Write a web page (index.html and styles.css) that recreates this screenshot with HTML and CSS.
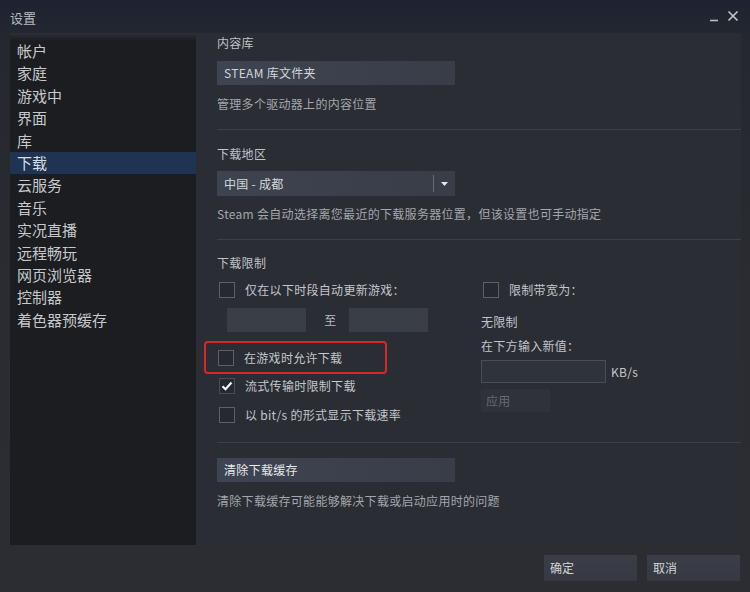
FILE: index.html
```html
<!DOCTYPE html>
<html lang="zh-CN">
<head>
    <meta charset="UTF-8">
    <title>设置</title>
    <link rel="stylesheet" href="styles.css">
</head>
<body>
    <div class="window">
        <div class="titlebar">
            <span class="title">设置</span>
            <div class="controls">
                <svg width="10" height="10" viewBox="0 0 10 10"><path d="M1 8.5h8" stroke="#b9bcc0" stroke-width="1.6"/></svg>
                <svg width="12" height="12" viewBox="0 0 12 12"><path d="M1.5 1.5l9 9M10.5 1.5l-9 9" stroke="#c3c6ca" stroke-width="1.6"/></svg>
            </div>
        </div>

        <div class="main">
            <ul class="sidebar">
                <li>帐户</li>
                <li>家庭</li>
                <li>游戏中</li>
                <li>界面</li>
                <li>库</li>
                <li class="active">下载</li>
                <li>云服务</li>
                <li>音乐</li>
                <li>实况直播</li>
                <li>远程畅玩</li>
                <li>网页浏览器</li>
                <li>控制器</li>
                <li>着色器预缓存</li>
            </ul>

            <div class="content">
                <div class="section first">
                    <div class="label">内容库</div>
                    <div class="btn wide">STEAM 库文件夹</div>
                    <div class="desc">管理多个驱动器上的内容位置</div>
                </div>

                <div class="section">
                    <div class="label">下载地区</div>
                    <div class="select">
                        <span class="select-text">中国 - 成都</span>
                        <span class="select-arrow"><svg width="7" height="4" viewBox="0 0 7 4"><path d="M0 0h7L3.5 4z" fill="#e4e6e8"/></svg></span>
                    </div>
                    <div class="desc">Steam 会自动选择离您最近的下载服务器位置，但该设置也可手动指定</div>
                </div>

                <div class="section limits">
                    <div class="label">下载限制</div>
                    <div class="columns">
                        <div class="col-left">
                            <div class="check-row"><span class="box"></span>仅在以下时段自动更新游戏：</div>
                            <div class="time-row">
                                <span class="field"></span>
                                <span class="to">至</span>
                                <span class="field"></span>
                            </div>
                            <div class="check-row marked"><span class="box"></span>在游戏时允许下载</div>
                            <div class="check-row next"><span class="box checked"><svg width="12" height="10" viewBox="0 0 12 10"><path d="M1.5 5.2l3 3L10.5 1.5" fill="none" stroke="#f2f3f4" stroke-width="2.2"/></svg></span>流式传输时限制下载</div>
                            <div class="check-row last"><span class="box"></span>以 bit/s 的形式显示下载速率</div>
                        </div>
                        <div class="col-right">
                            <div class="check-row"><span class="box"></span>限制带宽为：</div>
                            <div class="plain unlimited">无限制</div>
                            <div class="plain hint">在下方输入新值：</div>
                            <div class="rate-row">
                                <span class="rate-input"></span>
                                <span class="unit">KB/s</span>
                            </div>
                            <div class="apply">应用</div>
                        </div>
                    </div>
                </div>

                <div class="section last">
                    <div class="btn wide strong">清除下载缓存</div>
                    <div class="desc">清除下载缓存可能能够解决下载或启动应用时的问题</div>
                </div>
            </div>
        </div>

        <div class="footer">
            <div class="btn foot">确定</div>
            <div class="btn foot">取消</div>
        </div>
    </div>
</body>
</html>
```

FILE: styles.css
```css
body {
    margin: 0;
    padding: 0;
    background: #2a2c31;
    font-family: "Noto Sans CJK SC", "Liberation Sans", sans-serif;
    color: #c3c6ca;
}
.window {
    width: 750px;
    height: 592px;
    display: flex;
    flex-direction: column;
    background: linear-gradient(to bottom, #1d2331 0px, #25282e 40px, #2a2c32 300px, #2b2d33 592px);
    overflow: hidden;
}
.titlebar {
    height: 33px;
    display: flex;
    align-items: center;
    justify-content: space-between;
    padding: 0 9px 0 10px;
    box-sizing: border-box;
}
.title {
    font-size: 13px;
    color: #b7babe;
    margin-top: 1px;
}
.controls {
    display: flex;
    align-items: flex-end;
    gap: 8px;
    margin-top: -2px;
    margin-right: 2px;
}
.main {
    height: 512px;
    display: flex;
    margin: 0 9px 0 10px;
}
.sidebar {
    width: 186px;
    margin: 0;
    padding: 7px 0 0 0;
    list-style: none;
    background: linear-gradient(to bottom, #2b2f38 0px, #1b1d21 8px, #1b1d21 100%);
    font-size: 15px;
    color: #c6c9cc;
}
.sidebar li {
    height: 22.4px;
    line-height: 22.4px;
    padding-left: 7px;
}
.sidebar li.active {
    background: #1f3452;
    color: #d9dde2;
}
.content {
    flex: 1;
    background: #2a2d34;
    padding: 0 0 0 21px;
    font-size: 12px;
    line-height: 16px;
    letter-spacing: 0.3px;
}
.section {
    border-bottom: 1px solid #3d4048;
    padding-bottom: 17px;
}
.section.first {
    padding-top: 2px;
}
.section + .section {
    padding-top: 16px;
}
.section.last {
    border-bottom: none;
    padding-top: 15px;
}
.label {
    color: #bfc2c6;
}
.desc {
    color: #a3a6ab;
    margin-top: 11px;
}
.btn {
    background: linear-gradient(to right, #3f4452, #393d48);
    color: #d2d5d8;
    box-sizing: border-box;
}
.btn.wide {
    width: 238px;
    height: 24px;
    line-height: 24px;
    padding-left: 7px;
    margin-top: 10px;
}
.section.last .btn.wide {
    margin-top: 0;
}
.btn.strong {
    color: #e6e8ea;
}
.select {
    width: 238px;
    height: 25px;
    margin-top: 9px;
    display: flex;
    align-items: center;
    background: linear-gradient(to right, #3e4350, #393d48);
}
.select-text {
    flex: 1;
    padding-left: 7px;
    color: #d5d8db;
}
.select-arrow {
    width: 21px;
    height: 17px;
    border-left: 1px solid #666a73;
    display: flex;
    align-items: center;
    justify-content: center;
}
.select + .desc {
    margin-top: 10px;
}
.limits {
    padding-bottom: 19px;
}
.limits .label {
    margin-top: -1px;
}
.columns {
    display: flex;
    margin-top: 11px;
}
.col-left {
    width: 264px;
}
.check-row {
    display: flex;
    align-items: center;
    height: 16px;
    color: #c3c6ca;
}
.box {
    width: 16px;
    height: 16px;
    box-sizing: border-box;
    border: 1px solid #5d6067;
    background: #26292f;
    margin: 0 10px 0 2px;
    display: flex;
    align-items: center;
    justify-content: center;
}
.box.checked {
    border-color: #4a4d54;
}
.time-row {
    display: flex;
    align-items: center;
    margin: 10px 0 0 10px;
}
.field {
    width: 79px;
    height: 24px;
    background: #3a3e47;
}
.to {
    width: 43px;
    padding-left: 6px;
    box-sizing: border-box;
    text-align: center;
    color: #b5b8bc;
}
.check-row.marked {
    height: 29px;
    width: 167px;
    margin: 9px 0 0 -13px;
    padding-left: 12px;
    border: 2px solid #d9262b;
    border-radius: 4px;
}
.check-row.marked .box {
    margin-left: 0;
}
.check-row.next {
    margin-top: 4px;
}
.check-row.last {
    margin-top: 13px;
}
.col-right .check-row .box {
    margin-left: 2px;
}
.plain {
    color: #c1c4c8;
}
.unlimited {
    margin-top: 16px;
}
.hint {
    margin-top: 8px;
}
.rate-row {
    display: flex;
    align-items: center;
    margin-top: 6px;
}
.rate-input {
    width: 125px;
    height: 23px;
    box-sizing: border-box;
    border: 1px solid #494d56;
    background: #2f333b;
}
.unit {
    margin-left: 5px;
    color: #c3c6ca;
}
.apply {
    width: 69px;
    height: 23px;
    line-height: 23px;
    margin-top: 6px;
    padding-left: 5px;
    box-sizing: border-box;
    background: #2f3239;
    color: #666a70;
}
.footer {
    flex: 1;
    display: flex;
    justify-content: flex-end;
    gap: 10px;
    padding: 10px 10px 0 0;
}
.btn.foot {
    width: 93px;
    height: 26px;
    line-height: 26px;
    padding-left: 6px;
    font-size: 12px;
    background: linear-gradient(to bottom, #3b3e48, #363942);
}
```
